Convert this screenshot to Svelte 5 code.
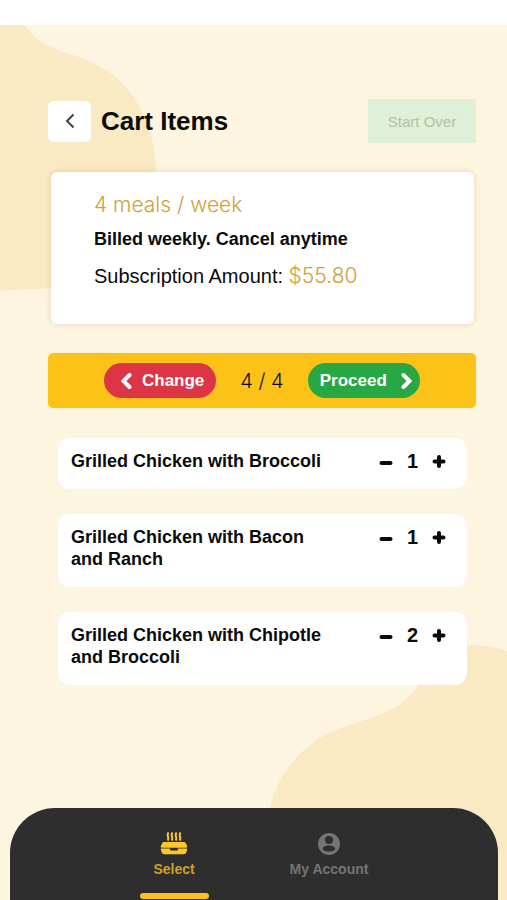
<script>
  let items = $state([
    { name: "Grilled Chicken with Broccoli", qty: 1 },
    { name: "Grilled Chicken with Bacon and Ranch", qty: 1 },
    { name: "Grilled Chicken with Chipotle and Broccoli", qty: 2 },
  ]);

  const mealsPerWeek = 4;
  const amount = 55.8;

  let total = $derived(items.reduce((sum, item) => sum + item.qty, 0));

  function add(item) {
    if (total < mealsPerWeek) item.qty += 1;
  }

  function remove(item) {
    if (item.qty > 0) item.qty -= 1;
  }
</script>

<div class="page">
  <svg class="blob top" viewBox="0 0 157 267" aria-hidden="true">
    <path d="M0 0H25C33 14 47 22 67 28C98 37 122 51 138 79C150 100 156 124 156 148C156 215 112 264 40 264C20 264 10 265 0 266Z" />
  </svg>
  <svg class="blob bottom" viewBox="0 0 237 256" aria-hidden="true">
    <path d="M0 164C6 134 30 98 73 83C105 72 130 68 147 43C160 16 182 1 202 1C214 1 226 3 237 7V256H0Z" />
  </svg>

  <main>
    <header>
      <button class="back" aria-label="Back">
        <svg width="10" height="16" viewBox="0 0 10 16"><path d="M8.500 1.500L2 8l6.500 6.500" /></svg>
      </button>
      <h1>Cart Items</h1>
      <button class="start-over" disabled>Start Over</button>
    </header>

    <section class="plan">
      <p class="gold">{mealsPerWeek} meals / week</p>
      <p class="billed">Billed weekly. Cancel anytime</p>
      <p class="amount">Subscription Amount: <span class="gold">${amount.toFixed(2)}</span></p>
    </section>

    <div class="bar">
      <button class="pill change">
        <svg width="12" height="16" viewBox="0 0 12 16"><path d="M9.500 2L3.500 8l6 6" /></svg>
        Change
      </button>
      <span class="count">{total} / {mealsPerWeek}</span>
      <button class="pill proceed">
        Proceed
        <svg width="12" height="16" viewBox="0 0 12 16"><path d="M2.500 2l6 6-6 6" /></svg>
      </button>
    </div>

    <ul>
      {#each items as item}
        <li>
          <span class="name">{item.name}</span>
          <div class="stepper">
            <button aria-label="Remove one" onclick={() => remove(item)}>
              <svg width="14" height="14" viewBox="0 0 14 14"><path d="M2.500 8h9" /></svg>
            </button>
            <span>{item.qty}</span>
            <button aria-label="Add one" onclick={() => add(item)}>
              <svg width="14" height="14" viewBox="0 0 14 14"><path d="M2.500 6.500h9M7 2v9" /></svg>
            </button>
          </div>
        </li>
      {/each}
    </ul>
  </main>

  <nav>
    <a class="active" href="#select">
      <svg width="28" height="24" viewBox="0 0 28 24">
        <g fill="none" stroke="currentColor" stroke-width="2">
          <path d="M8.600 0.500c-2.800 3 1.400 5 -1 8M12.600 0.500c-2.800 3 1.400 5 -1 8M16.600 0.500c-2.800 3 1.400 5 -1 8M20.600 0.500c-2.800 3 1.400 5 -1 8" />
        </g>
        <path fill="currentColor" d="M4.500 10h19c1.200 0 1.900.4 2.300 1.300l1.300 2.700c.3.800.1 1.700-.8 1.700H1.700c-.9 0-1.100-.9-.8-1.700l1.300-2.700c.4-.9 1.100-1.300 2.300-1.300zM1.700 16.500h8.500v2h7.600v-2h8.500c.8 0 1 .6.800 1.300l-1 3c-.4 1-1.200 1.400-2.200 1.400H4.100c-1 0-1.800-.4-2.200-1.400l-1-3c-.2-.7 0-1.300.8-1.300z" />
      </svg>
      Select
    </a>
    <a href="#account">
      <svg width="24" height="24" viewBox="0 0 24 24">
        <circle cx="12" cy="12" r="11" fill="currentColor" />
        <circle cx="12" cy="8" r="4" fill="#2e2e2e" />
        <path fill="#2e2e2e" d="M12 13.500c3.500 0 6.300 1.500 6.300 3.300 0 1.400-2.900 2.700-6.300 2.700s-6.300-1.300-6.300-2.700c0-1.800 2.800-3.300 6.300-3.300z" />
      </svg>
      My Account
    </a>
  </nav>
</div>

<style>
  :global(body) {
    margin: 0;
    background: #fff;
  }
  .page {
    position: relative;
    box-sizing: border-box;
    display: flex;
    flex-direction: column;
    min-height: 100vh;
    border-top: 25px solid #fff;
    background: #fef5e1;
    color: #0b0b0b;
    font-family: "Liberation Sans", Arial, sans-serif;
  }
  button {
    padding: 0;
    border: 0;
    background: none;
    color: inherit;
    font: inherit;
  }
  svg {
    display: block;
    fill: none;
  }
  .blob {
    position: absolute;
    fill: #faeac3;
  }
  .top {
    top: 0;
    left: 0;
    width: 157px;
  }
  .bottom {
    right: 0;
    bottom: 0;
    width: 237px;
  }
  main {
    position: relative;
    padding: 74px 31px 24px 48px;
  }
  header {
    display: flex;
    align-items: center;
    gap: 10px;
  }
  .back {
    display: flex;
    align-items: center;
    justify-content: center;
    width: 43px;
    height: 41px;
    border-radius: 6px;
    background: #fff;
  }
  .back svg {
    stroke: #444;
    stroke-width: 2;
  }
  h1 {
    margin: 0;
    font-size: 26px;
    line-height: 44px;
  }
  .start-over {
    width: 108px;
    height: 44px;
    margin-left: auto;
    background: #e0f0d8;
    color: #b3c1a3;
    font-size: 15px;
  }
  .plan {
    margin: 29px 2px 0 3px;
    padding: 19px 43px 33px;
    border-radius: 6px;
    background: #fff;
    box-shadow: 0 0 6px rgba(120, 90, 20, 0.2);
  }
  p {
    margin: 0;
  }
  .gold {
    color: #cda136;
    font-family: Inter, "Liberation Sans", sans-serif;
    font-size: 21px;
    font-weight: 300;
    line-height: 28px;
  }
  .billed {
    margin: 6px 0 8px;
    font-size: 18px;
    font-weight: bold;
    line-height: 28px;
  }
  .amount {
    font-size: 20px;
    line-height: 30px;
  }
  .bar {
    display: flex;
    align-items: center;
    justify-content: center;
    gap: 24px;
    height: 55px;
    margin-top: 29px;
    border-radius: 5px;
    background: #fdc218;
  }
  .pill {
    display: flex;
    align-items: center;
    justify-content: space-between;
    box-sizing: border-box;
    width: 112px;
    height: 35px;
    border-radius: 18px;
    color: #fff;
    font-size: 17px;
    font-weight: bold;
  }
  .pill svg {
    stroke: currentColor;
    stroke-width: 4;
    stroke-linecap: round;
  }
  .change {
    padding: 0 12px 0 16px;
    background: #dc3545;
  }
  .proceed {
    padding: 0 7px 0 12px;
    background: #28a745;
  }
  .count {
    font-family: Inter, "Liberation Sans", sans-serif;
    font-size: 20px;
    font-weight: 300;
  }
  ul {
    display: flex;
    flex-direction: column;
    gap: 25px;
    margin: 30px 9px 0 10px;
    padding: 0;
    list-style: none;
  }
  li {
    display: flex;
    align-items: flex-start;
    justify-content: space-between;
    padding: 12px 21px 17px 13px;
    border-radius: 12px;
    background: #fff;
    font-size: 18px;
    font-weight: bold;
    line-height: 22px;
  }
  .name {
    max-width: 270px;
  }
  .stepper {
    display: flex;
    align-items: center;
    gap: 14px;
    padding-top: 1px;
    font-size: 20px;
    line-height: 21px;
  }
  .stepper svg {
    stroke: #0b0b0b;
    stroke-width: 4;
    stroke-linecap: round;
  }
  nav {
    position: relative;
    display: flex;
    justify-content: center;
    margin: auto 9px 0 10px;
    padding-right: 5px;
    border-radius: 45px 45px 0 0;
    background: #2e2e2e;
  }
  a {
    display: flex;
    flex-direction: column;
    align-items: center;
    gap: 4px;
    width: 155px;
    padding-top: 24px;
    color: #747474;
    font-size: 14px;
    font-weight: bold;
    line-height: 18px;
    text-decoration: none;
  }
  a::after {
    content: "";
    width: 69px;
    height: 6px;
    margin: 11px 0 1px;
    border-radius: 3px;
  }
  .active {
    color: #d0a02c;
  }
  .active svg {
    color: #fdc728;
  }
  .active::after {
    background: #fdc218;
  }
</style>
